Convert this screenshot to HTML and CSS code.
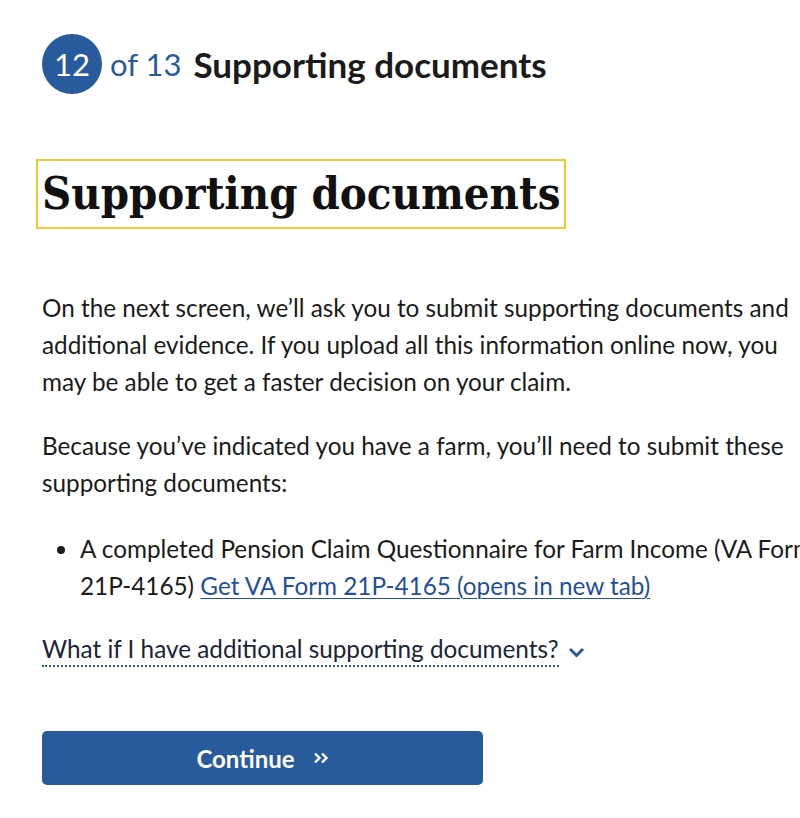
FILE: index.html
```html
<!DOCTYPE html>
<html lang="en">
<head>
<meta charset="utf-8">
<title>Supporting documents</title>
<link rel="stylesheet" href="styles.css">
</head>
<body>
<main class="page">
  <div class="step">
    <span class="step-num">12</span>
    <span class="step-of">of 13</span>
    <span class="step-title">Supporting documents</span>
  </div>

  <h1 class="title">Supporting documents</h1>

  <p class="text">On the next screen, we’ll ask you to submit supporting documents and additional evidence. If you upload all this information online now, you may be able to get a faster decision on your claim.</p>

  <p class="text">Because you’ve indicated you have a farm, you’ll need to submit these supporting documents:</p>

  <ul class="docs">
    <li>A completed Pension Claim Questionnaire for Farm Income (VA Form 21P-4165) <a class="link" href="#">Get VA Form 21P-4165 (opens in new tab)</a></li>
  </ul>

  <div class="more">
    <span class="more-text">What if I have additional supporting documents?</span>
    <svg class="more-chev" width="17" height="11" viewBox="0 0 17 11" aria-hidden="true"><path d="M2 2 L8.5 8.5 L15 2" fill="none" stroke="#285b9b" stroke-width="3"/></svg>
  </div>

  <button class="btn" type="button">
    <span>Continue</span>
    <svg class="btn-chev" width="16" height="14" viewBox="0 0 16 14" aria-hidden="true"><path d="M2 2.5 L6.5 7 L2 11.5 M9 2.5 L13.5 7 L9 11.5" fill="none" stroke="#fff" stroke-width="2.4"/></svg>
  </button>
</main>
</body>
</html>
```
FILE: styles.css
```css
html, body { overflow-x: hidden; }
body {
  margin: 0;
  background: #fff;
  color: #1b1b1b;
  font-family: Lato, "Noto Sans", sans-serif;
}
.page {
  width: 800px;
  padding: 34px 0 0 42px;
}
.step {
  display: flex;
  align-items: center;
  height: 60px;
}
.step-num {
  width: 60px;
  height: 60px;
  border-radius: 50%;
  background: #285b9b;
  color: #fff;
  font-size: 31px;
  display: flex;
  align-items: center;
  justify-content: center;
}
.step-of {
  margin-left: 8px;
  color: #285b9b;
  font-size: 31px;
}
.step-title {
  margin-left: 12px;
  font-size: 35px;
  font-weight: 700;
  color: #1b1b1b;
}
.title {
  display: inline-block;
  margin: 71px 0 0;
  font-family: "DejaVu Serif Condensed", "DejaVu Serif", serif;
  font-size: 45px;
  line-height: 58px;
  font-weight: bold;
  outline: 2px solid #f7c831;
  outline-offset: 4px;
  color: #111;
}
.text {
  max-width: 758px;
  margin: 66px 0 0;
  font-size: 24.3px;
  line-height: 37px;
}
.text + .text { margin-top: 27px; }
.docs {
  margin: 29px 0 0;
  padding-left: 38px;
  font-size: 24.3px;
  line-height: 37px;
}
.link {
  color: #1f4fa0;
  text-decoration: underline;
  text-underline-offset: 3px;
  text-decoration-thickness: 1px;
}
.more {
  margin-top: 31px;
  display: flex;
  align-items: center;
  font-size: 24.3px;
  line-height: 37px;
  color: #1b2438;
}
.more-text {
  line-height: 28px;
  padding-bottom: 2px;
  border-bottom: 2px dotted #285b9b;
}
.more-chev { margin-left: 9px; margin-top: 2px; }
.btn {
  margin-top: 64px;
  display: flex;
  align-items: center;
  justify-content: center;
  gap: 18px;
  width: 441px;
  height: 54px;
  border: 0;
  border-radius: 5px;
  background: #285b9b;
  color: #fff;
  font-family: Lato, sans-serif;
  font-size: 24px;
  font-weight: 700;
}
```
